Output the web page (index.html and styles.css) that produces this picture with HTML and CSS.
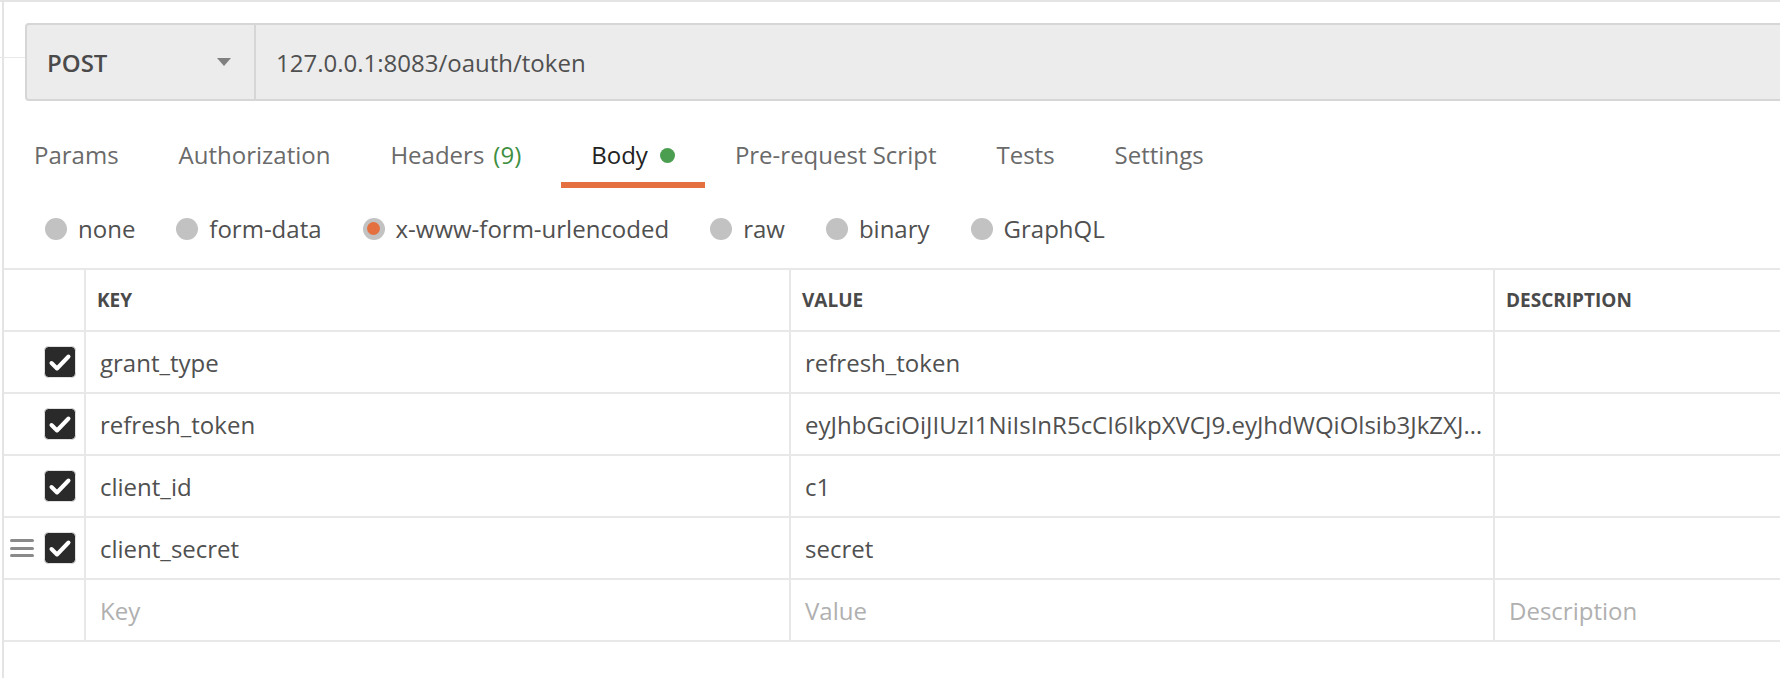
FILE: index.html
```html
<!DOCTYPE html>
<html lang="en">
<head>
<meta charset="utf-8">
<title>Request</title>
<link rel="stylesheet" href="styles.css">
</head>
<body>
<div class="page">
  <div class="stub"></div>
  <div class="urlbar">
    <div class="method"><span class="method-name">POST</span><span class="caret"></span></div>
    <div class="url">127.0.0.1:8083/oauth/token</div>
  </div>

  <nav class="tabs">
    <div class="tab">Params</div>
    <div class="tab">Authorization</div>
    <div class="tab">Headers<span class="count">(9)</span></div>
    <div class="tab active">Body<span class="dot"></span></div>
    <div class="tab">Pre-request Script</div>
    <div class="tab">Tests</div>
    <div class="tab">Settings</div>
  </nav>

  <div class="modes">
    <div class="mode"><span class="radio"></span>none</div>
    <div class="mode"><span class="radio"></span>form-data</div>
    <div class="mode"><span class="radio checked"></span>x-www-form-urlencoded</div>
    <div class="mode"><span class="radio"></span>raw</div>
    <div class="mode"><span class="radio"></span>binary</div>
    <div class="mode"><span class="radio"></span>GraphQL</div>
  </div>

  <div class="kv">
    <div class="cell head ctl"></div>
    <div class="cell head">KEY</div>
    <div class="cell head">VALUE</div>
    <div class="cell head last">DESCRIPTION</div>

    <div class="cell ctl"><svg class="check" viewBox="0 0 32 32"><rect x="0.5" y="0.5" width="31" height="31" rx="4" fill="#2a2a2a" stroke="#e2e2e2"/><polyline points="7.5,17 13,22.5 24.5,10.5" fill="none" stroke="#fff" stroke-width="4" stroke-linecap="round" stroke-linejoin="round"/></svg></div>
    <div class="cell key">grant_type</div>
    <div class="cell val">refresh_token</div>
    <div class="cell last"></div>

    <div class="cell ctl"><svg class="check" viewBox="0 0 32 32"><rect x="0.5" y="0.5" width="31" height="31" rx="4" fill="#2a2a2a" stroke="#e2e2e2"/><polyline points="7.5,17 13,22.5 24.5,10.5" fill="none" stroke="#fff" stroke-width="4" stroke-linecap="round" stroke-linejoin="round"/></svg></div>
    <div class="cell key">refresh_token</div>
    <div class="cell val">eyJhbGciOiJIUzI1NiIsInR5cCI6IkpXVCJ9.eyJhdWQiOlsib3JkZXJ…</div>
    <div class="cell last"></div>

    <div class="cell ctl"><svg class="check" viewBox="0 0 32 32"><rect x="0.5" y="0.5" width="31" height="31" rx="4" fill="#2a2a2a" stroke="#e2e2e2"/><polyline points="7.5,17 13,22.5 24.5,10.5" fill="none" stroke="#fff" stroke-width="4" stroke-linecap="round" stroke-linejoin="round"/></svg></div>
    <div class="cell key">client_id</div>
    <div class="cell val">c1</div>
    <div class="cell last"></div>

    <div class="cell ctl"><span class="handle"><i></i><i></i><i></i></span><svg class="check" viewBox="0 0 32 32"><rect x="0.5" y="0.5" width="31" height="31" rx="4" fill="#2a2a2a" stroke="#e2e2e2"/><polyline points="7.5,17 13,22.5 24.5,10.5" fill="none" stroke="#fff" stroke-width="4" stroke-linecap="round" stroke-linejoin="round"/></svg></div>
    <div class="cell key">client_secret</div>
    <div class="cell val">secret</div>
    <div class="cell last"></div>

    <div class="cell ctl"></div>
    <div class="cell key ph">Key</div>
    <div class="cell val ph">Value</div>
    <div class="cell last ph">Description</div>
  </div>
</div>
</body>
</html>
```

FILE: styles.css
```css
html, body {
  margin: 0;
  height: 100%;
  overflow: hidden;
  background: #ffffff;
}

body {
  box-sizing: border-box;
  border-top: 2px solid #e4e4e4;
  font-family: "Open Sans", "Noto Sans", sans-serif;
  color: #505050;
}

.page {
  position: relative;
  box-sizing: border-box;
  height: 100%;
  margin-left: 2px;
  border-left: 2px solid #e4e4e4;
  padding-top: 21px;
}

.stub {
  position: absolute;
  left: -4px;
  top: 55px;
  width: 25px;
  height: 1px;
  background: #e8e8e8;
}

/* URL bar */
.urlbar {
  display: flex;
  box-sizing: border-box;
  height: 78px;
  margin-left: 21px;
  margin-right: -40px;
  background: #ececec;
  border: 2px solid #d6d6d6;
  border-radius: 4px;
}

.method {
  box-sizing: border-box;
  width: 229px;
  display: flex;
  align-items: center;
  justify-content: space-between;
  padding: 0 23px 0 20px;
  border-right: 2px solid #d6d6d6;
}

.method-name {
  font-size: 24px;
  font-weight: 600;
  color: #4a4a4a;
}

.caret {
  width: 0;
  height: 0;
  border-left: 7.5px solid transparent;
  border-right: 7.5px solid transparent;
  border-top: 8px solid #808080;
}

.url {
  display: flex;
  align-items: center;
  padding-left: 20px;
  font-size: 24px;
  color: #505050;
}

/* Tabs */
.tabs {
  display: flex;
  margin: 37px 0 0 0;
}

.tab {
  display: flex;
  align-items: center;
  padding: 0 30px 11px;
  line-height: 33px;
  font-size: 24px;
  color: #6a6a6a;
  border-bottom: 6px solid transparent;
  white-space: nowrap;
}

.tab.active {
  color: #222222;
  border-bottom-color: #e4703f;
}

.count {
  color: #3f8f43;
  margin-left: 9px;
  margin-right: 10px;
}

.dot {
  width: 15px;
  height: 15px;
  border-radius: 50%;
  background: #4b9e50;
  margin-left: 12px;
  margin-top: 2px;
}

/* Body modes */
.modes {
  display: flex;
  margin: 24px 0 0 41px;
  line-height: 33px;
  font-size: 24px;
  color: #505050;
}

.mode {
  display: flex;
  align-items: center;
  margin-right: 41px;
  white-space: nowrap;
}

.radio {
  box-sizing: border-box;
  width: 22px;
  height: 22px;
  border-radius: 50%;
  background: #c2c2c2;
  margin-right: 11px;
  display: flex;
  align-items: center;
  justify-content: center;
}

.radio.checked::after {
  content: "";
  width: 13px;
  height: 13px;
  border-radius: 50%;
  background: #e4703f;
}

/* Key-value table */
.kv {
  display: grid;
  grid-template-columns: 82px 705px 704px 1fr;
  margin-top: 23px;
  border-top: 2px solid #e8e8e8;
}

.cell {
  box-sizing: border-box;
  height: 62px;
  display: flex;
  align-items: center;
  padding: 0 14px;
  border-right: 2px solid #e8e8e8;
  border-bottom: 2px solid #e8e8e8;
  font-size: 24px;
  color: #505050;
  white-space: nowrap;
  overflow: hidden;
}

.cell.head {
  padding-left: 11px;
  font-size: 19px;
  font-weight: 700;
  color: #4a4a4a;
}

.cell.last {
  border-right: none;
}

.cell.ctl {
  justify-content: flex-end;
  padding: 0 8px 0 0;
}

.cell.ph {
  color: #b0b0b0;
}

.check {
  width: 32px;
  height: 32px;
  flex: none;
}

.handle {
  display: flex;
  flex-direction: column;
  gap: 4.5px;
  width: 24px;
  margin-right: 10px;
}

.handle i {
  display: block;
  height: 3px;
  border-radius: 2px;
  background: #8a8a8a;
}
```
